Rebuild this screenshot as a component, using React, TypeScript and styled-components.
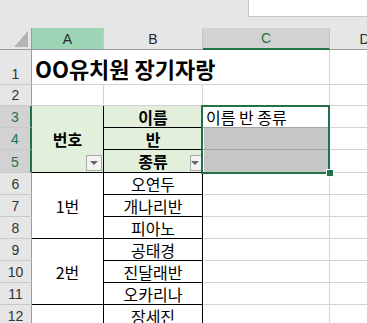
import React from 'react';
import styled, { createGlobalStyle } from 'styled-components';

const GREEN = '#217346';
const TABLE_BG = '#e2efda';
const GRID = '#d4d4d4';
const BLACK = '#000';

const GlobalStyle = createGlobalStyle`
  body {
    margin: 0;
    background: #e6e6e6;
    overflow: hidden;
  }
`;

const Window = styled.div`
  width: 367px;
  height: 323px;
  overflow: hidden;
  background: #e6e6e6;
  font-family: "Noto Sans CJK KR", "Noto Sans", sans-serif;
`;

const TopBar = styled.div`
  height: 28px;
  display: flex;
  justify-content: flex-end;
`;

const FormulaBox = styled.div`
  width: 118px;
  height: 16px;
  background: #fff;
  border-left: 1px solid #c6c6c6;
  border-bottom: 1px solid #c6c6c6;
`;

const Sheet = styled.div`
  display: grid;
  grid-template-columns: 32px 72px 99px 127px 70px;
  grid-template-rows: 22px 35px 21px 22px 22px 23px;
  grid-auto-rows: 22px;
  background: #fff;
`;

const Corner = styled.div`
  box-sizing: border-box;
  background: #e6e6e6;
  border-right: 1px solid #9b9b9b;
  border-bottom: 1px solid #9b9b9b;
  display: flex;
  align-items: flex-end;
  justify-content: flex-end;
  padding: 0 3px 2px 0;
`;

type HeadState = 'normal' | 'active' | 'selected';

const ColHead = styled.div<{ $state?: HeadState }>`
  box-sizing: border-box;
  display: flex;
  align-items: center;
  justify-content: center;
  font-family: "Liberation Sans", Arial, sans-serif;
  font-size: 14px;
  background: ${(p) => (p.$state === 'active' ? '#9fd5b7' : p.$state === 'selected' ? '#d2d2d2' : '#e6e6e6')};
  color: ${(p) => (p.$state === 'selected' ? GREEN : '#262626')};
  border-right: 1px solid #c6c6c6;
  border-bottom: ${(p) => (p.$state === 'selected' ? `2px solid ${GREEN}` : '1px solid #9b9b9b')};
`;

const RowHead = styled.div<{ $selected?: boolean }>`
  box-sizing: border-box;
  display: flex;
  align-items: flex-end;
  justify-content: center;
  padding-bottom: 1px;
  line-height: 18px;
  font-family: "Liberation Sans", Arial, sans-serif;
  font-size: 14px;
  background: ${(p) => (p.$selected ? '#d2d2d2' : '#e6e6e6')};
  color: ${(p) => (p.$selected ? GREEN : '#333')};
  border-right: ${(p) => (p.$selected ? `2px solid ${GREEN}` : '1px solid #9b9b9b')};
  border-bottom: 1px solid #c8c8c8;
`;

type CellProps = {
  $bg?: string;
  $right?: string;
  $bottom?: string;
  $bold?: boolean;
  $rows?: number;
};

const Cell = styled.div<CellProps>`
  box-sizing: border-box;
  position: relative;
  display: flex;
  align-items: center;
  justify-content: center;
  white-space: nowrap;
  font-size: 16px;
  line-height: 20px;
  color: #000;
  grid-row: span ${(p) => p.$rows || 1};
  font-weight: ${(p) => (p.$bold ? 700 : 400)};
  background: ${(p) => p.$bg || 'transparent'};
  border-right: 1px solid ${(p) => p.$right || GRID};
  border-bottom: 1px solid ${(p) => p.$bottom || GRID};
`;

const TitleCell = styled.div`
  box-sizing: border-box;
  grid-column: span 3;
  display: flex;
  align-items: flex-end;
  padding: 0 3px 5px;
  font-size: 22px;
  line-height: 22px;
  font-weight: 700;
  white-space: nowrap;
  border-right: 1px solid ${GRID};
  border-bottom: 1px solid ${GRID};
`;

const FilterButton = styled.span<{ $narrow?: boolean }>`
  position: absolute;
  right: ${(p) => (p.$narrow ? '0' : '1px')};
  bottom: 1px;
  width: ${(p) => (p.$narrow ? '12px' : '16px')};
  height: 16px;
  box-sizing: border-box;
  background: #f3f3f3;
  border: 1px solid #ababab;
  display: flex;
  align-items: center;
  justify-content: ${(p) => (p.$narrow ? 'flex-start' : 'center')};
  &::after {
    content: '';
    border-left: 4px solid transparent;
    border-right: 4px solid transparent;
    border-top: 4px solid #666;
  }
`;

const Selection = styled.div`
  grid-row: span 3;
  position: relative;
  display: grid;
  grid-template-rows: 22px 22px 23px;
  &::after {
    content: '';
    position: absolute;
    top: -1px;
    left: -2px;
    right: 0;
    bottom: -1px;
    border: 2px solid ${GREEN};
    pointer-events: none;
    z-index: 3;
  }
`;

const SelCell = styled.div<{ $shaded?: boolean }>`
  box-sizing: border-box;
  display: flex;
  align-items: center;
  padding-left: 3px;
  font-size: 16px;
  line-height: 20px;
  white-space: nowrap;
  background: ${(p) => (p.$shaded ? '#c6c6c6' : '#fff')};
  box-shadow: inset 1px 0 0 #fff;
  border-right: 1px solid ${GRID};
  border-bottom: 1px solid #a6a6a6;
`;

const FillHandle = styled.span`
  position: absolute;
  right: -4px;
  bottom: -4px;
  width: 6px;
  height: 6px;
  background: ${GREEN};
  border: 1px solid #fff;
  z-index: 4;
`;

type Entry = { row: number; group?: string; name: string };

const body: Entry[] = [
  { row: 6, group: '1번', name: '오연두' },
  { row: 7, name: '개나리반' },
  { row: 8, name: '피아노' },
  { row: 9, group: '2번', name: '공태경' },
  { row: 10, name: '진달래반' },
  { row: 11, name: '오카리나' },
  { row: 12, group: '', name: '장세진' },
];

function SheetCorner() {
  return (
    <Corner>
      <svg width="14" height="16" viewBox="0 0 14 16">
        <polygon points="14,0 14,16 0,16" fill="#b4b4b4" />
      </svg>
    </Corner>
  );
}

export default function App() {
  return (
    <Window>
      <GlobalStyle />
      <TopBar>
        <FormulaBox />
      </TopBar>
      <Sheet>
        <SheetCorner />
        <ColHead $state="active">A</ColHead>
        <ColHead>B</ColHead>
        <ColHead $state="selected">C</ColHead>
        <ColHead>D</ColHead>

        <RowHead>1</RowHead>
        <TitleCell>OO유치원 장기자랑</TitleCell>
        <Cell />

        <RowHead>2</RowHead>
        <Cell />
        <Cell />
        <Cell />
        <Cell />

        <RowHead $selected>3</RowHead>
        <Cell $rows={3} $bg={TABLE_BG} $right={BLACK} $bottom={BLACK} $bold>
          번호
          <FilterButton />
        </Cell>
        <Cell $bg={TABLE_BG} $right={BLACK} $bottom={BLACK} $bold>이름</Cell>
        <Selection>
          <SelCell>이름 반 종류</SelCell>
          <SelCell $shaded />
          <SelCell $shaded />
          <FillHandle />
        </Selection>
        <Cell />

        <RowHead $selected>4</RowHead>
        <Cell $bg={TABLE_BG} $right={BLACK} $bottom={BLACK} $bold>반</Cell>
        <Cell />

        <RowHead $selected>5</RowHead>
        <Cell $bg={TABLE_BG} $right={BLACK} $bottom={BLACK} $bold>
          종류
          <FilterButton $narrow />
        </Cell>
        <Cell />

        {body.map((e) => (
          <React.Fragment key={e.row}>
            <RowHead>{e.row}</RowHead>
            {e.group !== undefined && (
              <Cell $rows={3} $right={BLACK} $bottom={BLACK}>{e.group}</Cell>
            )}
            <Cell $right={BLACK} $bottom={BLACK}>{e.name}</Cell>
            <Cell />
            <Cell />
          </React.Fragment>
        ))}
      </Sheet>
    </Window>
  );
}
